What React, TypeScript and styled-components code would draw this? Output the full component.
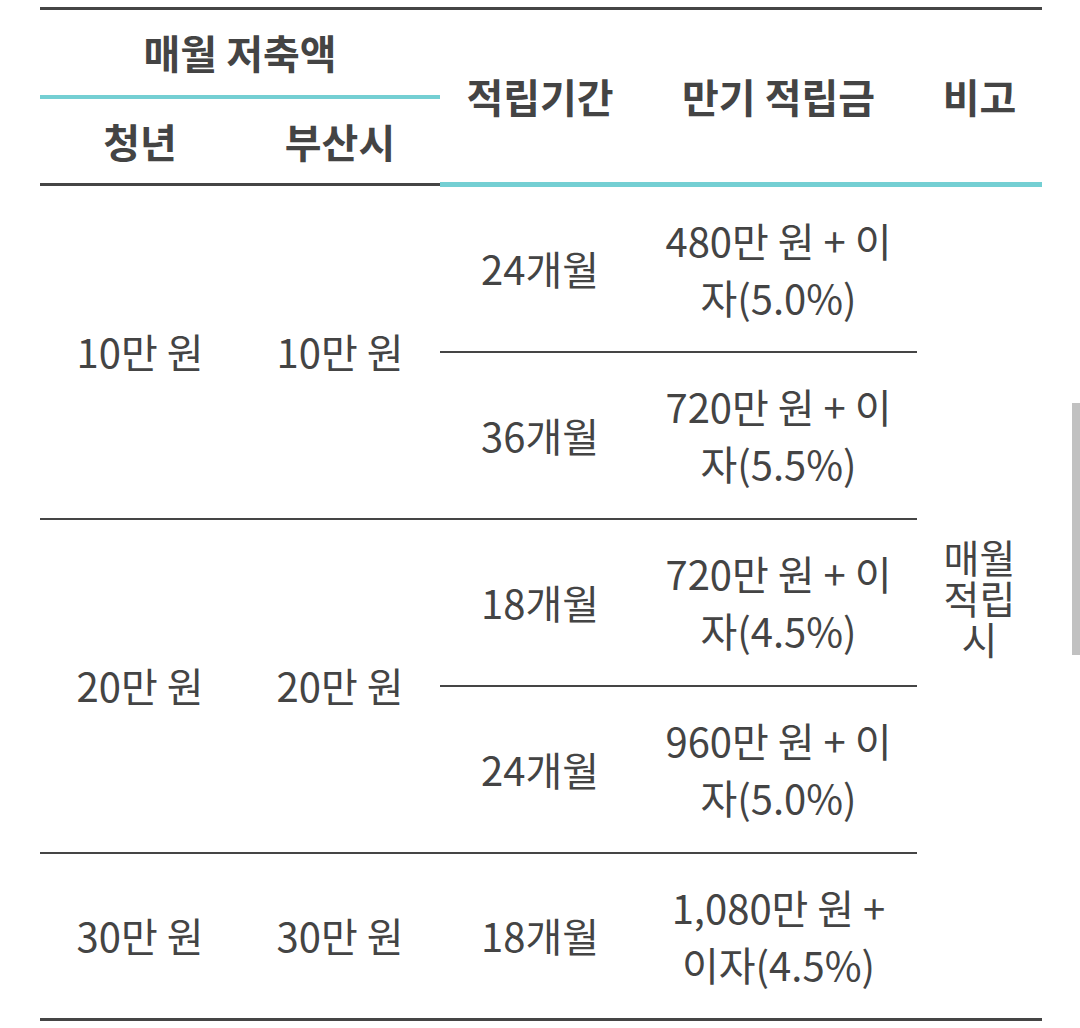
import React, { FunctionComponent } from "react";
import styled, { createGlobalStyle } from "styled-components";

const TEXT = "#444444";
const LINE = "#454545";
const TEAL = "#74cfd3";

const GlobalStyle = createGlobalStyle`
  html, body {
    margin: 0;
    padding: 0;
    background: #ffffff;
  }
  body {
    font-family: "Noto Sans CJK KR", "Noto Sans", sans-serif;
    color: ${TEXT};
  }
`;

const Page = styled.div`
  padding: 7px 38px 0 40px;
  width: 1080px;
  box-sizing: border-box;
`;

const SavingsTable = styled.table`
  width: 1002px;
  table-layout: fixed;
  border-collapse: collapse;
  border-top: 3px solid ${LINE};
  border-bottom: 3px solid ${LINE};
`;

const HeadRow = styled.tr`
  height: 88px;
`;

const HeadCell = styled.th<{ $teal?: boolean; $thick?: boolean }>`
  padding: 0;
  font-size: 40px;
  font-weight: 700;
  line-height: 1.4;
  text-align: center;
  vertical-align: middle;
  color: ${TEXT};
  border-bottom: ${({ $teal, $thick }) =>
    $teal ? `${$thick ? 5 : 4}px solid ${TEAL}` : `3px solid ${LINE}`};
`;

const BodyRow = styled.tr`
  height: 167px;
`;

const Cell = styled.td`
  padding: 0 13px;
  font-size: 40px;
  font-weight: 400;
  line-height: 57px;
  text-align: center;
  vertical-align: middle;
  color: ${TEXT};
  border-bottom: 2px solid ${LINE};
`;

const NoteCell = styled.td`
  padding: 0 10px 10px;
  font-size: 39px;
  line-height: 41px;
  text-align: center;
  vertical-align: middle;
  color: ${TEXT};
  border-bottom: 3px solid ${LINE};
`;

const ScrollThumb = styled.div`
  position: fixed;
  top: 403px;
  right: 0;
  width: 8px;
  height: 252px;
  background: #c1c1c1;
`;

interface Plan {
  term: string;
  total: string;
}

interface Group {
  monthly: string;
  city: string;
  plans: Plan[];
}

const groups: Group[] = [
  {
    monthly: "10만 원",
    city: "10만 원",
    plans: [
      { term: "24개월", total: "480만 원 + 이자(5.0%)" },
      { term: "36개월", total: "720만 원 + 이자(5.5%)" },
    ],
  },
  {
    monthly: "20만 원",
    city: "20만 원",
    plans: [
      { term: "18개월", total: "720만 원 + 이자(4.5%)" },
      { term: "24개월", total: "960만 원 + 이자(5.0%)" },
    ],
  },
  {
    monthly: "30만 원",
    city: "30만 원",
    plans: [{ term: "18개월", total: "1,080만 원 + 이자(4.5%)" }],
  },
];

const totalRows = groups.reduce((n, g) => n + g.plans.length, 0);

const App: FunctionComponent = () => {
  return (
    <Page>
      <GlobalStyle />
      <SavingsTable>
        <colgroup>
          <col style={{ width: 200 }} />
          <col style={{ width: 200 }} />
          <col style={{ width: 200 }} />
          <col style={{ width: 277 }} />
          <col style={{ width: 125 }} />
        </colgroup>
        <thead>
          <HeadRow>
            <HeadCell colSpan={2} $teal>
              매월 저축액
            </HeadCell>
            <HeadCell rowSpan={2} $teal $thick>
              적립기간
            </HeadCell>
            <HeadCell rowSpan={2} $teal $thick>
              만기 적립금
            </HeadCell>
            <HeadCell rowSpan={2} $teal $thick>
              비고
            </HeadCell>
          </HeadRow>
          <HeadRow>
            <HeadCell>청년</HeadCell>
            <HeadCell>부산시</HeadCell>
          </HeadRow>
        </thead>
        <tbody>
          {groups.map((group, gi) =>
            group.plans.map((plan, pi) => (
              <BodyRow key={`${gi}-${pi}`}>
                {pi === 0 && (
                  <>
                    <Cell rowSpan={group.plans.length}>{group.monthly}</Cell>
                    <Cell rowSpan={group.plans.length}>{group.city}</Cell>
                  </>
                )}
                <Cell>{plan.term}</Cell>
                <Cell>{plan.total}</Cell>
                {gi === 0 && pi === 0 && (
                  <NoteCell rowSpan={totalRows}>매월 적립 시</NoteCell>
                )}
              </BodyRow>
            ))
          )}
        </tbody>
      </SavingsTable>
      <ScrollThumb />
    </Page>
  );
};

export default App;
